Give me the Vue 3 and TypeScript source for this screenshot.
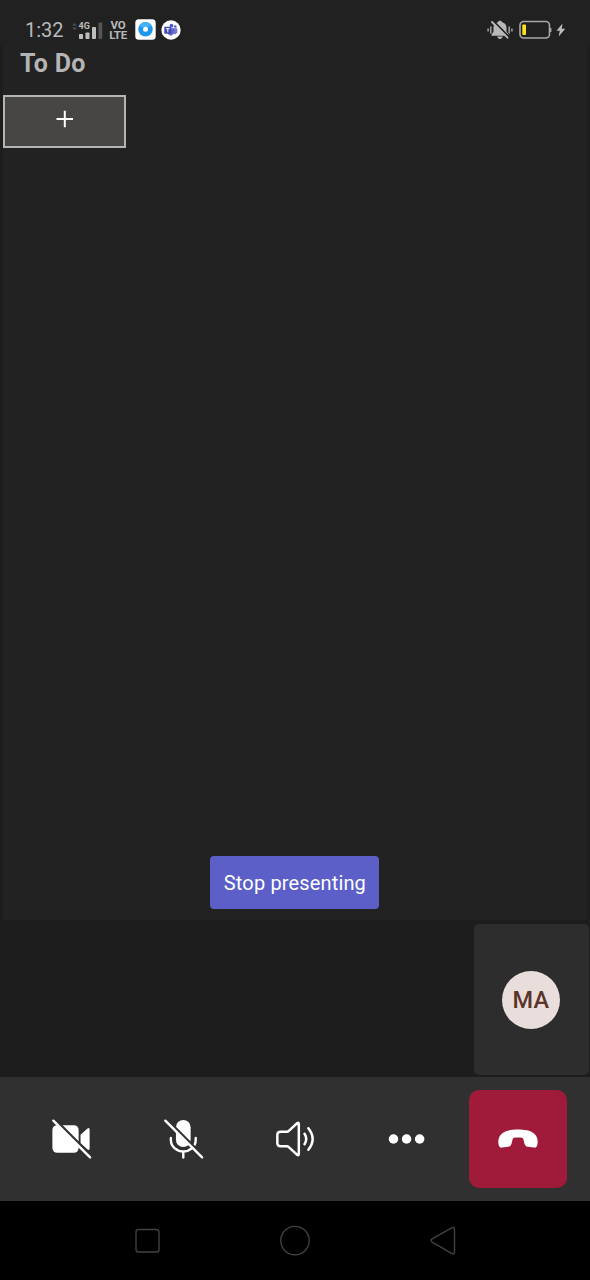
<script setup lang="ts">
import { ref } from 'vue'

const time = ref('1:32')
const initials = ref('MA')
</script>

<template>
  <main class="screen">
    <header class="status">
      <span class="time">{{ time }}</span>
      <svg class="signal" width="34" height="24" viewBox="0 0 34 24">
        <path d="M1 7.500 3.500 5 6 7.500zM1 9.500h5L3.500 12z" fill="#505050" />
        <text x="7.500" y="10.500" class="net">4G</text>
        <g fill="#bdbdbd">
          <rect x="8" y="16" width="4" height="5" rx=".8" />
          <rect x="14.500" y="14.500" width="4" height="6.500" rx=".8" />
          <rect x="21" y="9" width="4" height="12" rx=".8" />
        </g>
        <rect x="27.500" y="4.500" width="3.700" height="16.500" rx=".8" fill="#555" />
      </svg>
      <span class="volte"><span>VO</span><span>LTE</span></span>
      <svg class="app" width="21" height="21" viewBox="0 0 21 21">
        <rect x=".3" y=".3" width="20.400" height="20.400" rx="3.500" fill="#fff" />
        <circle cx="10.500" cy="10.300" r="7.200" fill="#1e96ee" />
        <path d="M4 7.500a7.200 7.200 0 0 1 12.500-1L12 9z" fill="#46b0f8" />
        <circle cx="10.500" cy="10.300" r="2.500" fill="#fff" />
      </svg>
      <svg class="teams" width="20" height="20" viewBox="0 0 20 20">
        <circle cx="10" cy="10" r="9.700" fill="#fff" />
        <circle cx="10.500" cy="5.700" r="1.900" fill="#5059c9" />
        <circle cx="14.300" cy="6.500" r="1.300" fill="#5059c9" />
        <path d="M12.500 8.300h3.800v3.700a2.400 2.400 0 0 1-3.800 1.700z" fill="#7279d4" />
        <path d="M7 8.300h6.200v3.500a3.500 3.500 0 0 1-6.200 2.300z" fill="#5e65cc" />
        <rect x="3.300" y="6.800" width="7" height="7" rx=".7" fill="#444bb0" />
        <path d="M5 8.700h3.600M6.800 8.700v3.600" stroke="#fff" stroke-width="1" />
      </svg>
      <svg class="bell" width="26" height="20" viewBox="0 0 26 20">
        <path d="M13 .8c1.300 0 1.900.7 2.100 1.400 2.900.8 4.400 2.700 4.400 5.300v4.200l1.900 2.600v1.500H4.600v-1.500l1.900-2.600V7.500c0-2.600 1.500-4.500 4.400-5.300.2-.7.800-1.400 2.100-1.400zM10.200 16.600h5.600c-.4 1.500-1.400 2.400-2.800 2.400s-2.400-.9-2.800-2.400z" fill="#b8b8b8" />
        <path d="M1.100 8.500v3M3.800 6.500v7M22.200 6.500v7M24.900 8.500v3" stroke="#a5a5a5" stroke-width="1.500" />
        <path d="M6.700 1.300 22.500 17.300" stroke="#212121" stroke-width="1.800" />
        <path d="M5 2 20.500 17.700" stroke="#b8b8b8" stroke-width="1.900" stroke-linecap="round" />
      </svg>
      <svg class="battery" width="33" height="20" viewBox="0 0 33 20">
        <rect x="1" y="1.500" width="29.500" height="16.500" rx="3.800" fill="none" stroke="#a8a8a8" stroke-width="1.600" />
        <path d="M31.500 8v4" stroke="#a8a8a8" stroke-width="1.800" />
        <rect x="3.300" y="4.500" width="3.700" height="10.500" rx=".8" fill="#fbe416" />
      </svg>
      <svg class="bolt" width="10" height="14" viewBox="0 0 10 14">
        <path d="M6.500.5.500 7.700h3.300L2.700 13.500 9.300 5.700H5.800z" fill="#bbb" />
      </svg>
    </header>

    <section class="stage">
      <h1>To Do</h1>
      <button class="add" aria-label="Add">
        <svg width="18" height="18" viewBox="0 0 18 18">
          <path d="M8.800.8v16.500M.5 9h16.500" stroke="#fff" stroke-width="2" />
        </svg>
      </button>
      <button class="stop">Stop presenting</button>
    </section>

    <section class="people">
      <div class="tile"><div class="avatar">{{ initials }}</div></div>
    </section>

    <footer class="controls">
      <button class="control" aria-label="Camera">
        <svg width="44" height="44" viewBox="0 0 44 44">
          <rect x="2.500" y="7.500" width="27.500" height="29" rx="5" fill="#fff" />
          <path d="M32 17.500 39 11.200q2.500-1.800 2.500 1v19.600q0 2.800-2.500 1L32 26.500z" fill="#fff" />
          <path d="M6.500 3 43.500 40" stroke="#303030" stroke-width="3" />
          <path d="M3.500 2.800 42 41.300" stroke="#fff" stroke-width="2.500" stroke-linecap="round" />
        </svg>
      </button>
      <button class="control" aria-label="Microphone">
        <svg width="44" height="44" viewBox="0 0 44 44">
          <rect x="14.600" y="2" width="15.400" height="28.500" rx="7.700" fill="#fff" />
          <path d="M9.300 21v2a13 12 0 0 0 26 0v-2M22.300 35v6.500" fill="none" stroke="#fff" stroke-width="2.500" stroke-linecap="round" />
          <path d="M6.300 3 42.800 39.500" stroke="#303030" stroke-width="3" />
          <path d="M3.500 2.800 42 41.300" stroke="#fff" stroke-width="2.500" stroke-linecap="round" />
        </svg>
      </button>
      <button class="control" aria-label="Speaker">
        <svg width="44" height="44" viewBox="0 0 44 44">
          <g fill="none" stroke="#fff" stroke-width="2.600" stroke-linecap="round" stroke-linejoin="round">
            <path d="M7 14.500h6.500q1 0 1.700-.7l9-8.300q1.800-1.300 1.800.7v31.600q0 2-1.800.7l-9-8.300q-.7-.7-1.700-.7H7q-3.500 0-3.500-3v-9q0-3 3.500-3z" />
            <path d="M32 16.500q3.500 5.500 0 11M36 10.800q9 11.200 0 22.400" />
          </g>
        </svg>
      </button>
      <button class="control" aria-label="More">
        <svg width="44" height="44" viewBox="0 0 44 44" fill="#fff">
          <circle cx="8.900" cy="22" r="5" />
          <circle cx="22.600" cy="22" r="5" />
          <circle cx="36.300" cy="22" r="5" />
        </svg>
      </button>
      <button class="hangup" aria-label="Leave">
        <svg width="44" height="24" viewBox="0 0 44 24">
          <path d="M22 2.600c6 0 12.500.8 16 4 3.500 3 4.300 7.500 3.300 11.500-.5 1.900-1.500 2.700-3.200 2.500l-6.300-.9c-1.900-.3-2.700-1-3.200-2.700l-1.200-4.600c-.3-1-.5-1.400-1.400-1.600-2.500-.4-5.500-.4-8 0-.9.200-1.100.6-1.400 1.600L15.400 17c-.5 1.700-1.300 2.400-3.200 2.700l-6.300.9c-1.700.2-2.700-.6-3.200-2.500C1.700 14.100 2.500 9.600 6 6.600c3.500-3.200 10-4 16-4z" fill="#fff" />
        </svg>
      </button>
    </footer>

    <nav class="nav">
      <svg width="30" height="32" viewBox="0 0 30 32"><rect x="4" y="4.500" width="23" height="22.500" rx="2.500" /></svg>
      <svg width="32" height="32" viewBox="0 0 32 32"><circle cx="16" cy="15.600" r="14.200" /></svg>
      <svg width="30" height="32" viewBox="0 0 30 32"><path d="M24 2.700 4.200 13.900q-2.500 1.600 0 3.200L24 28.500q2.500 1 2.500-1.700V4.500q0-2.800-2.500-1.800z" /></svg>
    </nav>
  </main>
</template>

<style>
body {
  margin: 0;
  background: #1c1c1c;
}
</style>

<style scoped>
* {
  box-sizing: border-box;
}

.screen {
  width: 590px;
  height: 1280px;
  display: flex;
  flex-direction: column;
  background: #1d1d1d;
  font-family: Roboto, "Liberation Sans", sans-serif;
}

svg {
  display: block;
  flex: none;
}

button {
  border: 0;
  padding: 0;
  font: inherit;
  color: #fff;
  display: flex;
  align-items: center;
  justify-content: center;
  background: none;
}

.status {
  height: 46px;
  padding: 13px 24px 0 25px;
  display: flex;
  align-items: center;
  background: #212121;
  color: #b9b9b9;
}

.time {
  width: 46px;
  font-size: 20px;
  letter-spacing: 0;
}

.net {
  font: 700 9px Roboto, sans-serif;
  fill: #bdbdbd;
}

.volte {
  width: 18px;
  margin: 0 0 0 4px;
  display: flex;
  flex-direction: column;
  align-items: center;
  font-size: 11.5px;
  line-height: 10px;
  font-weight: 700;
  letter-spacing: -0.3px;
}

.app {
  margin-left: 8px;
}

.teams {
  margin-left: 5px;
}

.bell {
  margin-left: auto;
}

.battery {
  margin-left: 6px;
}

.bolt {
  margin-left: 4px;
}

.stage {
  height: 874px;
  margin: 0 3px;
  display: flex;
  flex-direction: column;
  background: #222;
}

h1 {
  margin: 2px 0 0 17px;
  font: 700 25px/31px Roboto, sans-serif;
  letter-spacing: 0.35px;
  color: #b5b5b5;
}

.add {
  width: 123px;
  height: 53px;
  margin-top: 16px;
  padding-bottom: 5px;
  border: 2px solid #b4b4b4;
  background: #484644;
}

.stop {
  width: 169px;
  height: 53px;
  margin: auto auto 11px 207.400px;
  border-radius: 4px;
  background: #5b5fc7;
  font-size: 20px;
  letter-spacing: 0.15px;
}

.people {
  height: 157px;
  padding: 4px 1.500px 2px;
  display: flex;
  justify-content: flex-end;
}

.tile {
  width: 115px;
  display: flex;
  align-items: center;
  justify-content: center;
  border-radius: 5px;
  background: #2d2d2d;
}

.avatar {
  width: 58px;
  height: 58px;
  padding-top: 1px;
  border-radius: 50%;
  display: flex;
  align-items: center;
  justify-content: center;
  background: #e9dedb;
  color: #5a3528;
  font-size: 23.5px;
  font-weight: 500;
  letter-spacing: 0.3px;
}

.controls {
  height: 124px;
  padding: 0 23px 0 15.500px;
  display: flex;
  align-items: center;
  background: #303030;
}

.control {
  width: 111.700px;
  height: 98px;
}

.control svg {
  width: 42px;
  height: 42px;
}

.hangup {
  width: 98px;
  height: 98px;
  margin-left: auto;
  border-radius: 10px;
  background: #9f1b39;
}

.nav {
  height: 79px;
  padding: 0 132px;
  display: flex;
  align-items: center;
  justify-content: space-between;
  background: #000;
}

.nav svg {
  fill: none;
  stroke: #414141;
  stroke-width: 1.400;
}
</style>
